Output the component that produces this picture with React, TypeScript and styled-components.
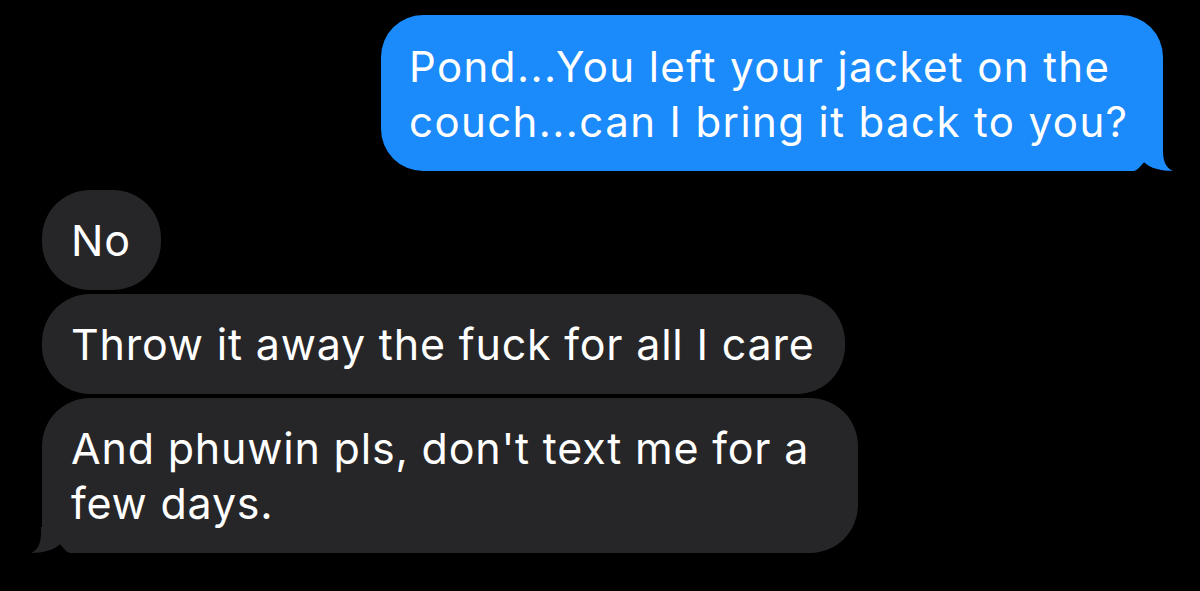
import React from 'react';
import styled, { createGlobalStyle } from 'styled-components';

const GlobalStyle = createGlobalStyle`
  html, body {
    margin: 0;
    padding: 0;
    background: #000;
  }
  body {
    font-family: Inter, "Liberation Sans", Arial, sans-serif;
    -webkit-font-smoothing: antialiased;
  }
`;

const Thread = styled.main`
  width: 1200px;
  height: 591px;
  box-sizing: border-box;
  padding: 15px 37px 0 42px;
  display: flex;
  flex-direction: column;
  gap: 4px;
  background: #000;
  overflow: hidden;
`;

const Row = styled.div<{ $out?: boolean; $space?: number }>`
  display: flex;
  justify-content: ${(p) => (p.$out ? 'flex-end' : 'flex-start')};
  margin-top: ${(p) => p.$space ?? 0}px;
`;

const Bubble = styled.div<{ $out?: boolean; $tail?: boolean }>`
  position: relative;
  box-sizing: border-box;
  max-width: ${(p) => (p.$out ? 782 : 816)}px;
  padding: ${(p) => (p.$out ? '24px 30px 22px 28px' : '23px 30px 22px 29px')};
  border-radius: ${(p) => (p.$out ? 42 : 48)}px;
  ${(p) =>
    p.$tail &&
    (p.$out ? 'border-bottom-right-radius: 16px;' : 'border-bottom-left-radius: 16px;')}
  background: ${(p) => (p.$out ? '#1b8afa' : '#262628')};
  color: #fff;
  font-size: ${(p) => (p.$out ? 42 : 43)}px;
  line-height: 55px;
  letter-spacing: ${(p) => (p.$out ? 1.4 : 0.8)}px;
`;

const TailSvg = styled.svg<{ $out?: boolean }>`
  position: absolute;
  bottom: 0;
  width: 40px;
  height: 26px;
  ${(p) => (p.$out ? 'right: -10px;' : 'left: -11px; transform: scaleX(-1);')}
`;

// hook at the bottom corner of the last bubble in a group; the black
// wedge cuts the notch between the hook and the bubble body
function Tail({ out, color }: { out?: boolean; color: string }) {
  return (
    <TailSvg $out={out} viewBox="0 0 40 26" aria-hidden>
      <path d="M0 26 C3 26 7 22 11 17 C17 23 28 26 40 26 Z" fill="#000" />
      <path
        d="M0 0 H30 V6 C30 16 33 23 40 26 C28 26 17 23 11 17 C7 22 3 26 0 26 Z"
        fill={color}
      />
    </TailSvg>
  );
}

export default function App() {
  return (
    <>
      <GlobalStyle />
      <Thread>
        <Row $out>
          <Bubble $out $tail>
            Pond...You left your jacket on the couch...can I bring it back to you?
            <Tail out color="#1b8afa" />
          </Bubble>
        </Row>
        <Row $space={15}>
          <Bubble>No</Bubble>
        </Row>
        <Row>
          <Bubble>Throw it away the fuck for all I care</Bubble>
        </Row>
        <Row>
          <Bubble $tail>
            And phuwin pls, don't text me for a few days.
            <Tail color="#262628" />
          </Bubble>
        </Row>
      </Thread>
    </>
  );
}
